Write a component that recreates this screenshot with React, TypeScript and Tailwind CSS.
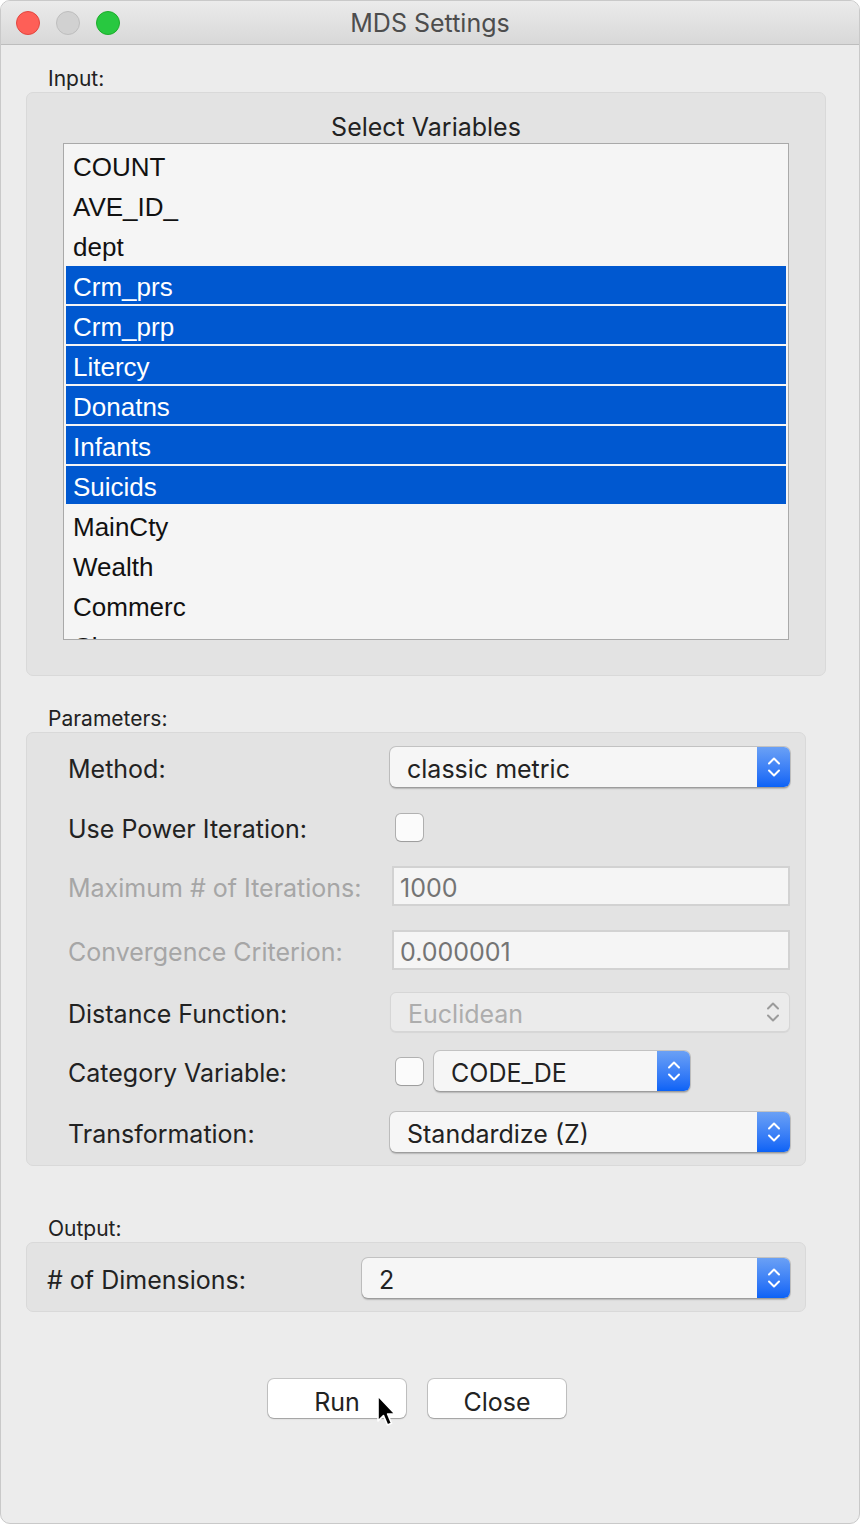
import React from "react";

const ui = { fontFamily: "Inter, 'Noto Sans', sans-serif" };
const listFont = { fontFamily: "'Liberation Sans', Arial, sans-serif" };

const variables = [
  "COUNT",
  "AVE_ID_",
  "dept",
  "Crm_prs",
  "Crm_prp",
  "Litercy",
  "Donatns",
  "Infants",
  "Suicids",
  "MainCty",
  "Wealth",
  "Commerc",
  "Clergy",
];
const selected = new Set(["Crm_prs", "Crm_prp", "Litercy", "Donatns", "Infants", "Suicids"]);

function Chevrons({ color = "white" }: { color?: string }) {
  return (
    <svg width="16" height="26" viewBox="0 0 16 26" fill="none">
      <path d="M3 9.5 L8 4.5 L13 9.5" stroke={color} strokeWidth="2" strokeLinecap="round" strokeLinejoin="round" />
      <path d="M3 16.5 L8 21.5 L13 16.5" stroke={color} strokeWidth="2" strokeLinecap="round" strokeLinejoin="round" />
    </svg>
  );
}

function Select({ value, width, disabled }: { value: string; width: string; disabled?: boolean }) {
  if (disabled) {
    return (
      <div
        className={`${width} h-[40px] flex items-center rounded-[6px] border border-[#d6d6d6] bg-[#ebebeb] shadow-[0_1px_1px_rgba(0,0,0,0.06)]`}
      >
        <span className="flex-1 pl-[17px] pt-[6px] text-[25px] text-[#adadad]">{value}</span>
        <span className="w-[33px] flex items-center justify-center">
          <Chevrons color="#9b9b9b" />
        </span>
      </div>
    );
  }
  return (
    <div
      className={`${width} h-[40px] flex rounded-[6px] bg-[#f6f6f6] shadow-[0_0_0_1px_rgba(0,0,0,0.14),0_1.5px_1.5px_rgba(0,0,0,0.2)]`}
    >
      <span className="flex-1 flex items-center pl-[17px] pt-[6px] text-[25px] text-[#222]">{value}</span>
      <span className="w-[33px] flex items-center justify-center rounded-r-[6px] bg-gradient-to-b from-[#6aa0f5] to-[#0a62f6]">
        <Chevrons />
      </span>
    </div>
  );
}

function Checkbox() {
  return (
    <div className="w-[27px] h-[27px] rounded-[5px] bg-[#fbfbfb] shadow-[0_0_0_1px_rgba(0,0,0,0.22),0_1px_1px_rgba(0,0,0,0.12)]" />
  );
}

function Field({ value }: { value: string }) {
  return (
    <div className="w-[398px] h-[40px] flex items-center border-2 border-[#d2d2d2] bg-[#f5f5f5] pl-[6px] pt-[6px] text-[25px] text-[#747474]">
      {value}
    </div>
  );
}

function Row({ label, dim, children, className = "" }: { label: string; dim?: boolean; children: React.ReactNode; className?: string }) {
  return (
    <div className={`flex items-center h-[40px] ${className}`}>
      <span className={`w-[322px] pt-[6px] text-[25px] ${dim ? "text-[#a6a6a6]" : "text-[#222]"}`}>{label}</span>
      {children}
    </div>
  );
}

export default function App() {
  return (
    <div className="bg-white w-[860px] h-[1524px]" style={ui}>
      <div className="relative w-[860px] h-[1524px] rounded-[10px] overflow-hidden bg-[#ececec] border border-[#c9c9c9]">
        {/* title bar */}
        <div className="relative h-[44px] flex items-center justify-center bg-gradient-to-b from-[#ebebeb] to-[#d8d8d8] border-b border-[#bdbdbd]">
          <div className="absolute left-[15px] top-[10px] flex gap-[16px]">
            <span className="w-[24px] h-[24px] rounded-full bg-[#fe5f57] border border-[#e2463f]" />
            <span className="w-[24px] h-[24px] rounded-full bg-[#d1d1d1] border border-[#bebebe]" />
            <span className="w-[24px] h-[24px] rounded-full bg-[#28c840] border border-[#1dad2b]" />
          </div>
          <span className="pt-[2px] text-[25px] text-[#4d4d4d]">MDS Settings</span>
        </div>

        <div className="pl-[25px]">
          {/* Input */}
          <div className="pl-[22px] pt-[21px] h-[47px] text-[21px] text-[#222] leading-[26px]">Input:</div>
          <div className="w-[800px] h-[584px] rounded-[7px] bg-[#e3e3e3] border border-[#d9d9d9] flex flex-col items-center">
            <div className="pt-[21px] h-[50px] text-[25px] leading-[26px] text-[#222]">Select Variables</div>
            <div className="w-[726px] h-[497px] border border-[#a9a9a9] bg-[#f5f5f5] overflow-hidden px-[2px] pt-[2px]" style={listFont}>
              {variables.map((v) => (
                <div key={v} className="h-[40px]">
                  <div
                    className={`h-[38px] flex items-center pl-[7px] text-[26px] pt-[4px] ${
                      selected.has(v) ? "bg-[#0058d0] text-white" : "text-[#111]"
                    }`}
                  >
                    {v}
                  </div>
                </div>
              ))}
            </div>
          </div>

          {/* Parameters */}
          <div className="pl-[22px] pt-[30px] h-[56px] text-[21px] text-[#222] leading-[26px]">Parameters:</div>
          <div className="w-[780px] h-[434px] rounded-[7px] bg-[#e3e3e3] border border-[#d9d9d9] pl-[41px] pt-[14px]">
            <Row label="Method:">
              <Select value="classic metric" width="w-[400px]" />
            </Row>
            <Row label="Use Power Iteration:" className="mt-[20px]">
              <span className="pl-[6px]">
                <Checkbox />
              </span>
            </Row>
            <Row label="Maximum # of Iterations:" dim className="mt-[19px]">
              <span className="pl-[2px]">
                <Field value="1000" />
              </span>
            </Row>
            <Row label="Convergence Criterion:" dim className="mt-[24px]">
              <span className="pl-[2px]">
                <Field value="0.000001" />
              </span>
            </Row>
            <Row label="Distance Function:" className="mt-[22px]">
              <Select value="Euclidean" width="w-[400px]" disabled />
            </Row>
            <Row label="Category Variable:" className="mt-[19px]">
              <span className="pl-[6px] pr-[11px]">
                <Checkbox />
              </span>
              <Select value="CODE_DE" width="w-[256px]" />
            </Row>
            <Row label="Transformation:" className="mt-[21px]">
              <Select value="Standardize (Z)" width="w-[400px]" />
            </Row>
          </div>

          {/* Output */}
          <div className="pl-[22px] pt-[50px] h-[76px] text-[21px] text-[#222] leading-[26px]">Output:</div>
          <div className="w-[780px] h-[70px] rounded-[7px] bg-[#e3e3e3] border border-[#d9d9d9] pl-[20px] pt-[15px]">
            <div className="flex items-center h-[40px]">
              <span className="w-[315px] pt-[5px] text-[25px] text-[#222]">
                # of Dimensions:
              </span>
              <Select value="2" width="w-[428px]" />
            </div>
          </div>
        </div>

        {/* buttons */}
        <div className="relative mt-[67px] flex justify-center gap-[22px] pr-[26px]">
          <button className="w-[138px] h-[39px] rounded-[6px] bg-white pt-[5px] text-[25px] text-[#222] shadow-[0_0_0_1px_rgba(0,0,0,0.16),0_1px_1.5px_rgba(0,0,0,0.2)]">
            Run
          </button>
          <button className="w-[138px] h-[39px] rounded-[6px] bg-white pt-[5px] text-[25px] text-[#222] shadow-[0_0_0_1px_rgba(0,0,0,0.16),0_1px_1.5px_rgba(0,0,0,0.2)]">
            Close
          </button>
          <svg className="absolute left-[374px] top-[15px]" width="22" height="36" viewBox="0 0 22 36">
            <path
              d="M3 2 L3 27 L8.5 21.5 L12.5 31 L16.5 29.3 L12.6 20 L20 20 Z"
              fill="#000"
              stroke="#fff"
              strokeWidth="1.6"
              strokeLinejoin="round"
            />
          </svg>
        </div>
      </div>
    </div>
  );
}
